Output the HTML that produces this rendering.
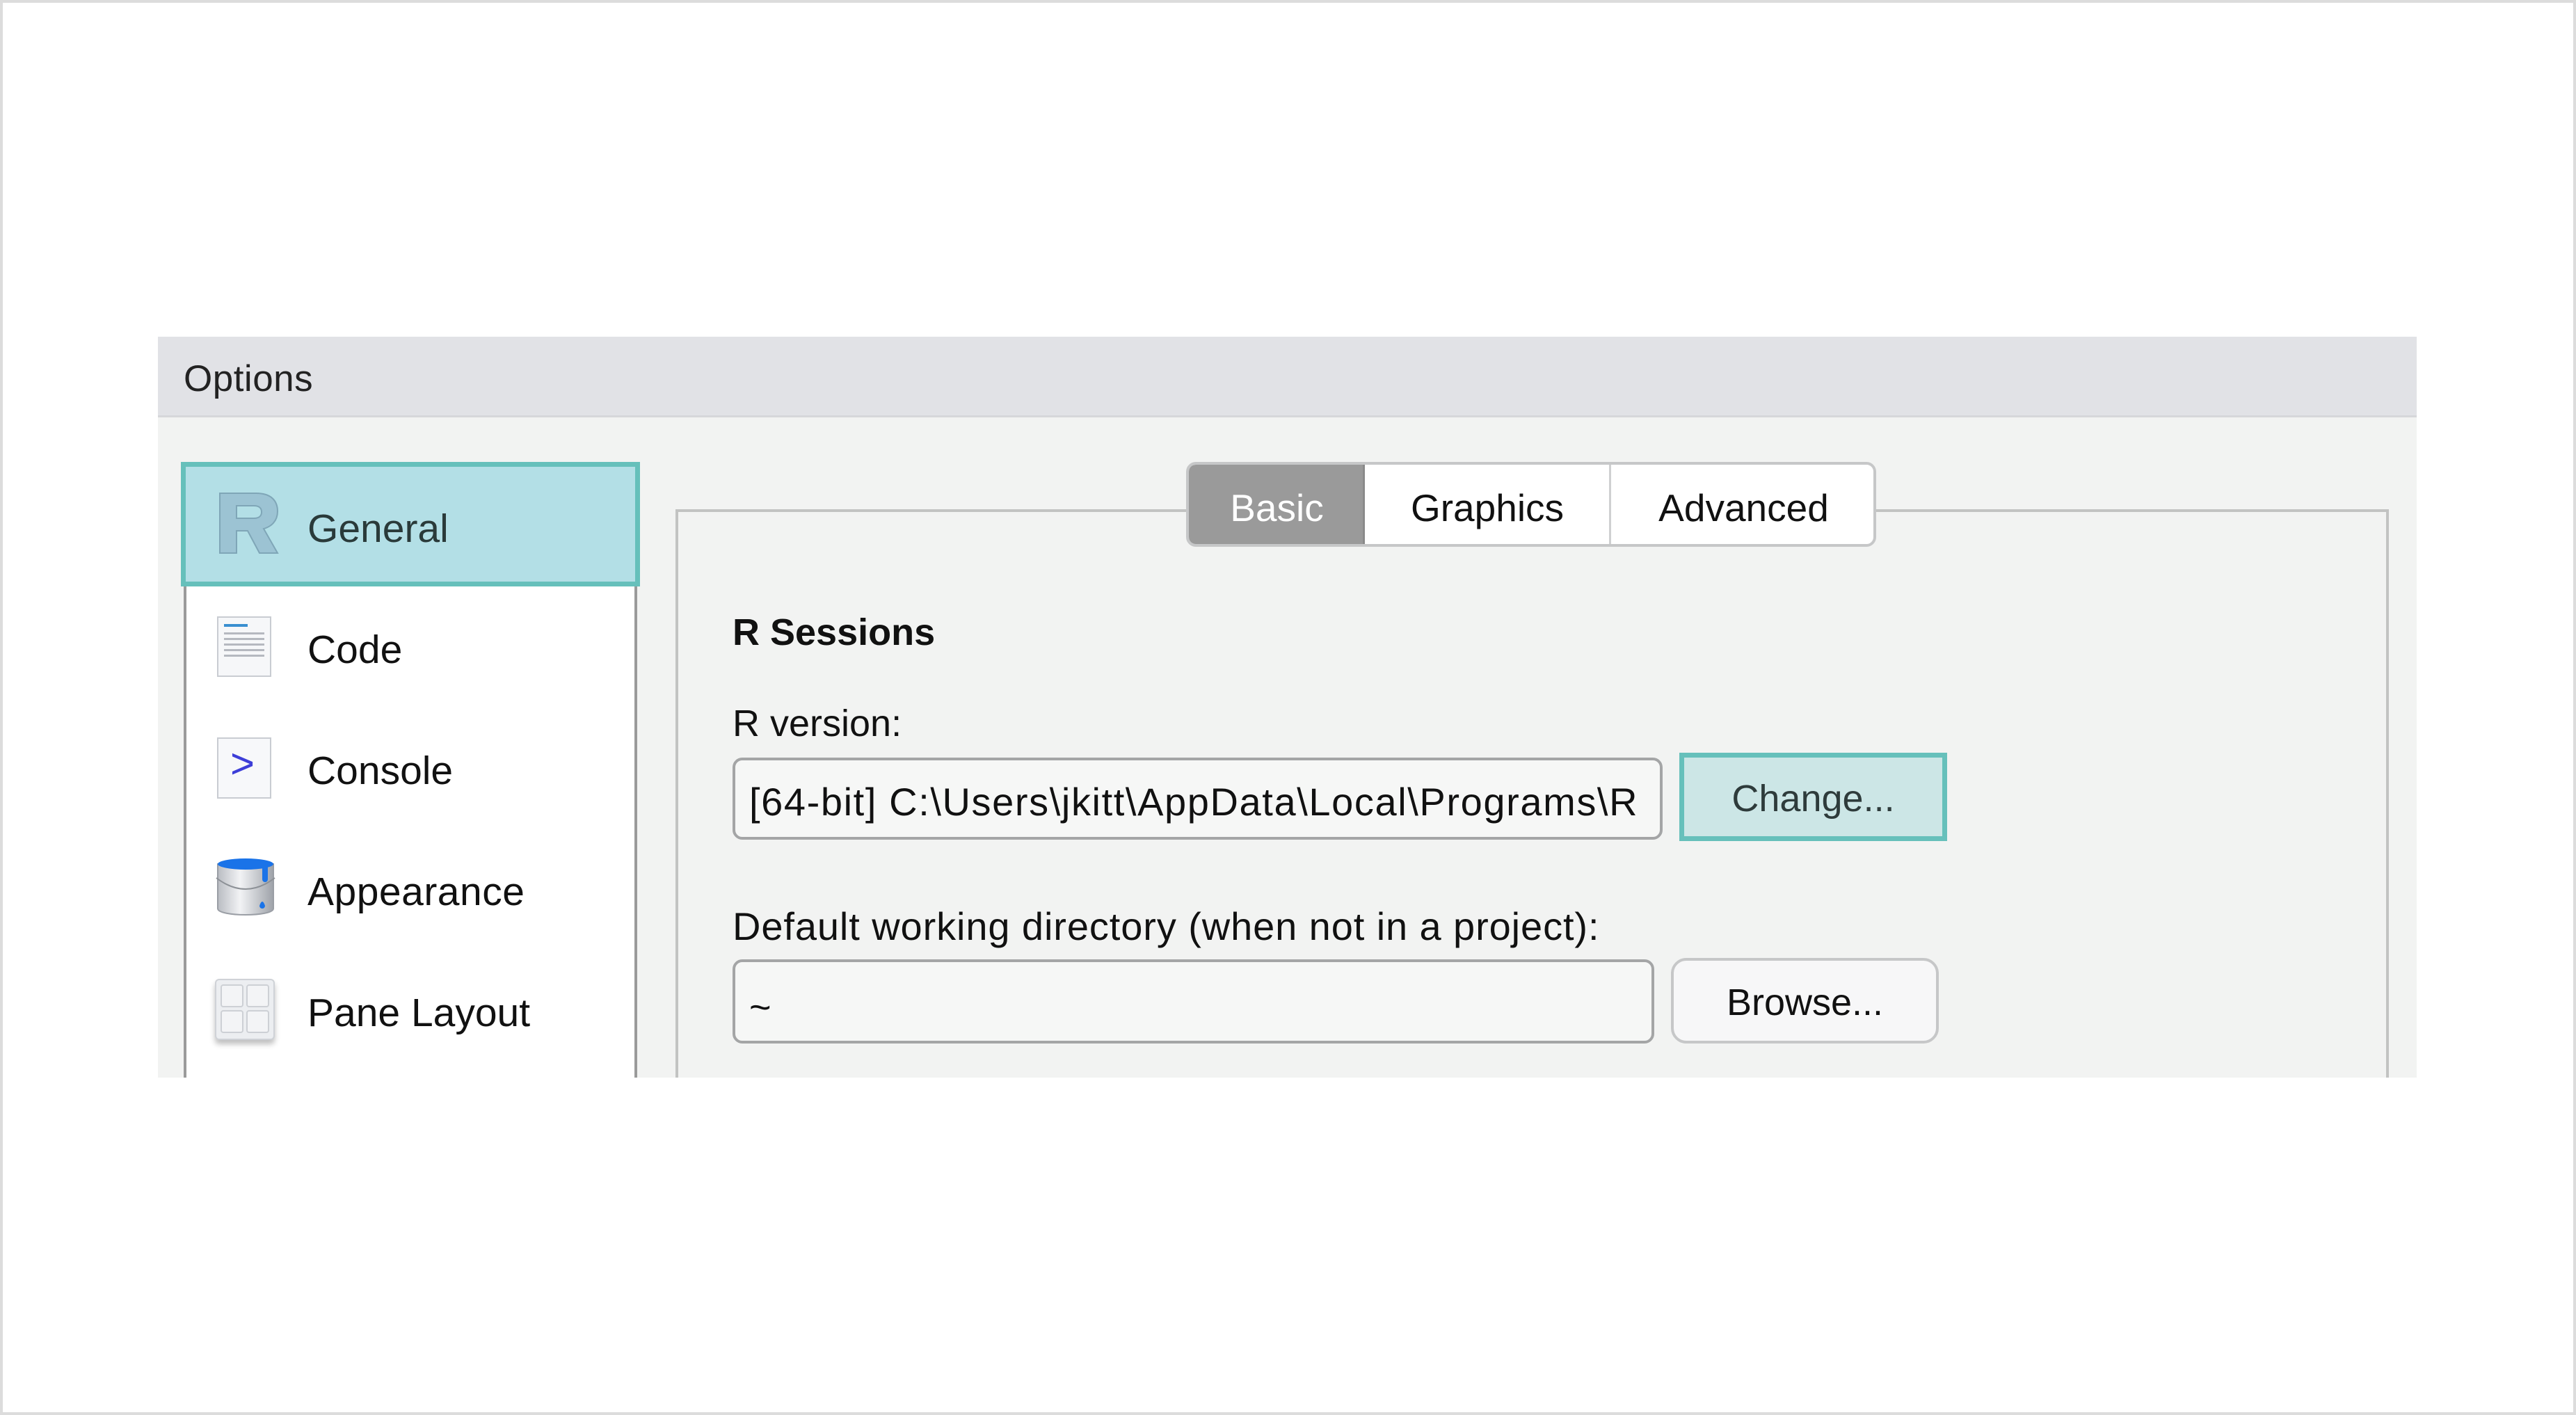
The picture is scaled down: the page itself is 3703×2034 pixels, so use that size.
<!DOCTYPE html>
<html><head><meta charset="utf-8"><style>
*{margin:0;padding:0;box-sizing:border-box}
body{width:3703px;height:2034px;background:#fff;position:relative;overflow:hidden;font-family:"Liberation Sans",sans-serif;color:#111}
.a{position:absolute}
.frame{left:0;top:0;width:3703px;height:2034px;border:4px solid #dcdcdc}
.t{position:absolute;white-space:nowrap;line-height:1}
</style></head><body>
<div class="a frame"></div>
<div class="a" style="left:227px;top:484px;width:3247px;height:1065px;background:#f2f3f2;overflow:hidden">
  <div class="a" style="left:0;top:0;width:3247px;height:116px;background:#e1e2e6;border-bottom:3px solid #d6d7da"></div>
  <div class="t" style="left:37px;top:34px;font-size:53px;color:#222;letter-spacing:0.5px">Options</div>

  <div class="a" style="left:37px;top:180px;width:652px;height:900px;background:#fff;border:4px solid #9a9a9a"></div>
  <div class="a" style="left:33px;top:180px;width:660px;height:179px;background:#b3dfe6;border:7px solid #66c0bb"></div>
  <svg class="a" style="left:86px;top:223px" width="90" height="90" viewBox="0 0 90 90">
    <path d="M3 2 H55 C78 2 86 14 86 28 C86 42 77 50 66 53 L86 88 H60 L43 56 H27 V88 H3 Z M27 20 V38 H52 C60 38 63 34 63 29 C63 24 60 20 52 20 Z" fill="#9cc3d3" stroke="#7fa6b7" stroke-width="2" fill-rule="evenodd"/>
  </svg>
  <div class="t" style="left:215px;top:248px;font-size:57px;color:#2a3a3a">General</div>

  <div class="a" style="left:85px;top:402px;width:78px;height:87px;background:#f6f7f9;border:2px solid #c9ccd2"></div>
  <div class="a" style="left:95px;top:413px;width:34px;height:4px;background:#3a8fd0"></div>
  <div class="a" style="left:95px;top:425px;width:58px;height:40px;background:repeating-linear-gradient(#8a8f99 0 3px,transparent 3px 8px);opacity:.6"></div>
  <div class="t" style="left:215px;top:422px;font-size:57px">Code</div>

  <div class="a" style="left:85px;top:576px;width:78px;height:88px;background:#f7f8fa;border:2px solid #c9ccd2"></div>
  <div class="t" style="left:104px;top:584px;font-size:60px;color:#3d3ed8">&gt;</div>
  <div class="t" style="left:215px;top:596px;font-size:57px">Console</div>

  <svg class="a" style="left:80px;top:748px" width="92" height="90" viewBox="0 0 92 90">
    <defs><linearGradient id="g" x1="0" x2="1"><stop offset="0" stop-color="#b9bcc2"/><stop offset=".4" stop-color="#f2f3f5"/><stop offset="1" stop-color="#9ea2a9"/></linearGradient></defs>
    <path d="M6 10 V74 C6 86 86 86 86 74 V10 Z" fill="url(#g)" stroke="#9a9ea5" stroke-width="2"/>
    <ellipse cx="46" cy="10" rx="40" ry="8" fill="#1a73e8"/>
    <path d="M70 14 v18 a4 4 0 0 0 8 0 v-20z" fill="#1a73e8"/>
    <path d="M66 70 q4 -12 8 0 a4 4 0 0 1 -8 0z" fill="#1a73e8"/>
    <path d="M4 30 Q46 62 88 30" fill="none" stroke="#8c9096" stroke-width="2"/>
  </svg>
  <div class="t" style="left:215px;top:770px;font-size:57px;letter-spacing:0.5px">Appearance</div>

  <div class="a" style="left:82px;top:923px;width:86px;height:88px;background:#eceef1;border:2px solid #cfd2d7;border-radius:6px;box-shadow:0 6px 8px rgba(0,0,0,.25)"></div>
  <div class="a" style="left:90px;top:931px;width:33px;height:33px;background:#f3f4f6;border:2px solid #cdd0d5;border-radius:4px"></div>
  <div class="a" style="left:127px;top:931px;width:33px;height:33px;background:#f3f4f6;border:2px solid #cdd0d5;border-radius:4px"></div>
  <div class="a" style="left:90px;top:968px;width:33px;height:33px;background:#f3f4f6;border:2px solid #cdd0d5;border-radius:4px"></div>
  <div class="a" style="left:127px;top:968px;width:33px;height:33px;background:#f3f4f6;border:2px solid #cdd0d5;border-radius:4px"></div>
  <div class="t" style="left:215px;top:944px;font-size:57px">Pane Layout</div>

  <div class="a" style="left:744px;top:248px;width:2463px;height:900px;border:4px solid #c2c3c2"></div>
  <div class="a" style="left:1478px;top:180px;width:992px;height:122px;border:4px solid #c6c7c8;border-radius:14px;background:#fff;overflow:hidden">
    <div class="a" style="left:0;top:0;width:253px;height:118px;background:#9a9a9a;border-right:3px solid #8a8a8a"></div>
    <div class="a" style="left:604px;top:0;width:3px;height:118px;background:#cfd0d1"></div>
    <div class="t" style="left:0;width:253px;text-align:center;top:35px;font-size:55px;color:#fff">Basic</div>
    <div class="t" style="left:253px;width:352px;text-align:center;top:35px;font-size:55px">Graphics</div>
    <div class="t" style="left:607px;width:381px;text-align:center;top:35px;font-size:55px">Advanced</div>
  </div>

  <div class="t" style="left:826px;top:398px;font-size:54px;font-weight:bold">R Sessions</div>
  <div class="t" style="left:826px;top:529px;font-size:54px">R version:</div>
  <div class="a" style="left:826px;top:605px;width:1337px;height:118px;border:4px solid #a4a5a6;border-radius:14px;background:#f6f7f6;overflow:hidden">
    <div class="t" style="left:20px;top:32px;font-size:56px;letter-spacing:1.6px">[64-bit] C:\Users\jkitt\AppData\Local\Programs\R</div>
  </div>
  <div class="a" style="left:2187px;top:598px;width:385px;height:127px;border:7px solid #66c0bb;background:#cce6e6"></div>
  <div class="t" style="left:2187px;width:385px;text-align:center;top:637px;font-size:54px;color:#2e3b3b">Change...</div>

  <div class="t" style="left:826px;top:820px;font-size:56px;letter-spacing:0.9px">Default working directory (when not in a project):</div>
  <div class="a" style="left:826px;top:895px;width:1325px;height:121px;border:4px solid #a4a5a6;border-radius:14px;background:#f6f7f6"></div>
  <div class="t" style="left:850px;top:937px;font-size:54px">~</div>
  <div class="a" style="left:2175px;top:893px;width:385px;height:123px;border:4px solid #c6c7c8;border-radius:22px;background:#f7f7f8"></div>
  <div class="t" style="left:2175px;width:385px;text-align:center;top:930px;font-size:54px">Browse...</div>
</div>
</body></html>
